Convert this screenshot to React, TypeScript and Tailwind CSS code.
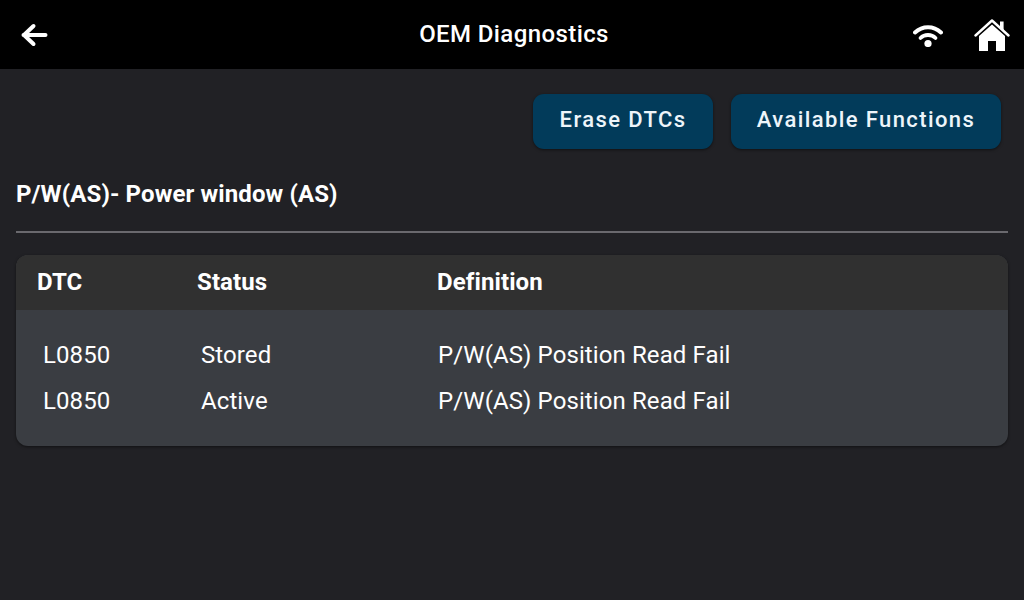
export default function App() {
  const rows = [
    ["L0850", "Stored", "P/W(AS) Position Read Fail"],
    ["L0850", "Active", "P/W(AS) Position Read Fail"],
  ];
  return (
    <div className="w-[1024px] h-[600px] bg-[#212125] text-white flex flex-col overflow-hidden font-['Roboto',sans-serif]">
      <header className="h-[69px] bg-black flex items-center shrink-0 relative">
        <div className="pl-[21px]">
          <svg width="27" height="24" viewBox="0 0 27 24" className="block">
            <path d="M2.5 12H24.5M12.5 3L3 12L12.5 21" fill="none" stroke="#fff" strokeWidth="4" strokeLinecap="round" strokeLinejoin="round" />
          </svg>
        </div>
        <div className="absolute left-[4px] right-0 top-0 h-[68px] flex items-center justify-center text-[24px] font-medium tracking-[0.4px]">OEM Diagnostics</div>
        <div className="ml-auto flex items-center pr-[14px] gap-[31px]">
          <svg width="30" height="24" viewBox="0 0 30 24" className="block">
            <path d="M2 9.5C9.5 2.5 20.5 2.5 28 9.5" fill="none" stroke="#fff" strokeWidth="4" strokeLinecap="round" />
            <path d="M7.5 15C11.5 11 18.5 11 22.5 15" fill="none" stroke="#fff" strokeWidth="3.8" strokeLinecap="round" />
            <circle cx="15" cy="20.5" r="3.6" fill="#fff" />
          </svg>
          <svg width="36" height="34" viewBox="0 0 36 34" className="block">
            <path d="M26 3.5h3.6v9l-3.6-3z" fill="#fff" />
            <path d="M1.5 17.5L18 2.5L34.5 17.5" fill="none" stroke="#fff" strokeWidth="2.4" strokeLinecap="round" strokeLinejoin="round" />
            <path fillRule="evenodd" d="M18 6.5L31 18V33H22V23H14V33H5V18Z" fill="#fff" />
          </svg>
        </div>
      </header>
      <main className="flex-1 flex flex-col px-4">
        <div className="flex justify-end gap-[18px] pt-[25px] pr-[7px]">
          <button className="w-[180px] h-[55px] pb-[4px] rounded-[11px] bg-[#023b5a] text-[#eef5fa] text-[22px] font-medium tracking-[1.4px] shadow-[0_1px_3px_rgba(0,0,0,0.5)]">Erase DTCs</button>
          <button className="w-[270px] h-[55px] pb-[4px] rounded-[11px] bg-[#023b5a] text-[#eef5fa] text-[22px] font-medium tracking-[1.4px] shadow-[0_1px_3px_rgba(0,0,0,0.5)]">Available Functions</button>
        </div>
        <h2 className="mt-[30px] h-[30px] leading-[30px] text-[24px] font-bold tracking-[0.12px]">P/W(AS)- Power window (AS)</h2>
        <div className="mt-[22px] h-[2px] bg-[#6a696e]" />
        <section className="mt-[22px] rounded-[12px] overflow-hidden bg-[#3a3d42] shadow-[0_1px_3px_rgba(0,0,0,0.5)]">
          <div className="h-[55px] pb-[2px] bg-[#303030] flex items-center pl-[21px] text-[24px] font-bold tracking-[0.1px]">
            <div className="w-[160px]">DTC</div>
            <div className="w-[240px]">Status</div>
            <div>Definition</div>
          </div>
          <div className="pt-[22px] pb-[22px] text-[24px] leading-[46px] tracking-[0.1px]">
            {rows.map((r, i) => (
              <div key={i} className="flex h-[46px]">
                <div className="w-[185px] pl-[27px]">{r[0]}</div>
                <div className="w-[237px]">{r[1]}</div>
                <div>{r[2]}</div>
              </div>
            ))}
          </div>
        </section>
      </main>
    </div>
  );
}
